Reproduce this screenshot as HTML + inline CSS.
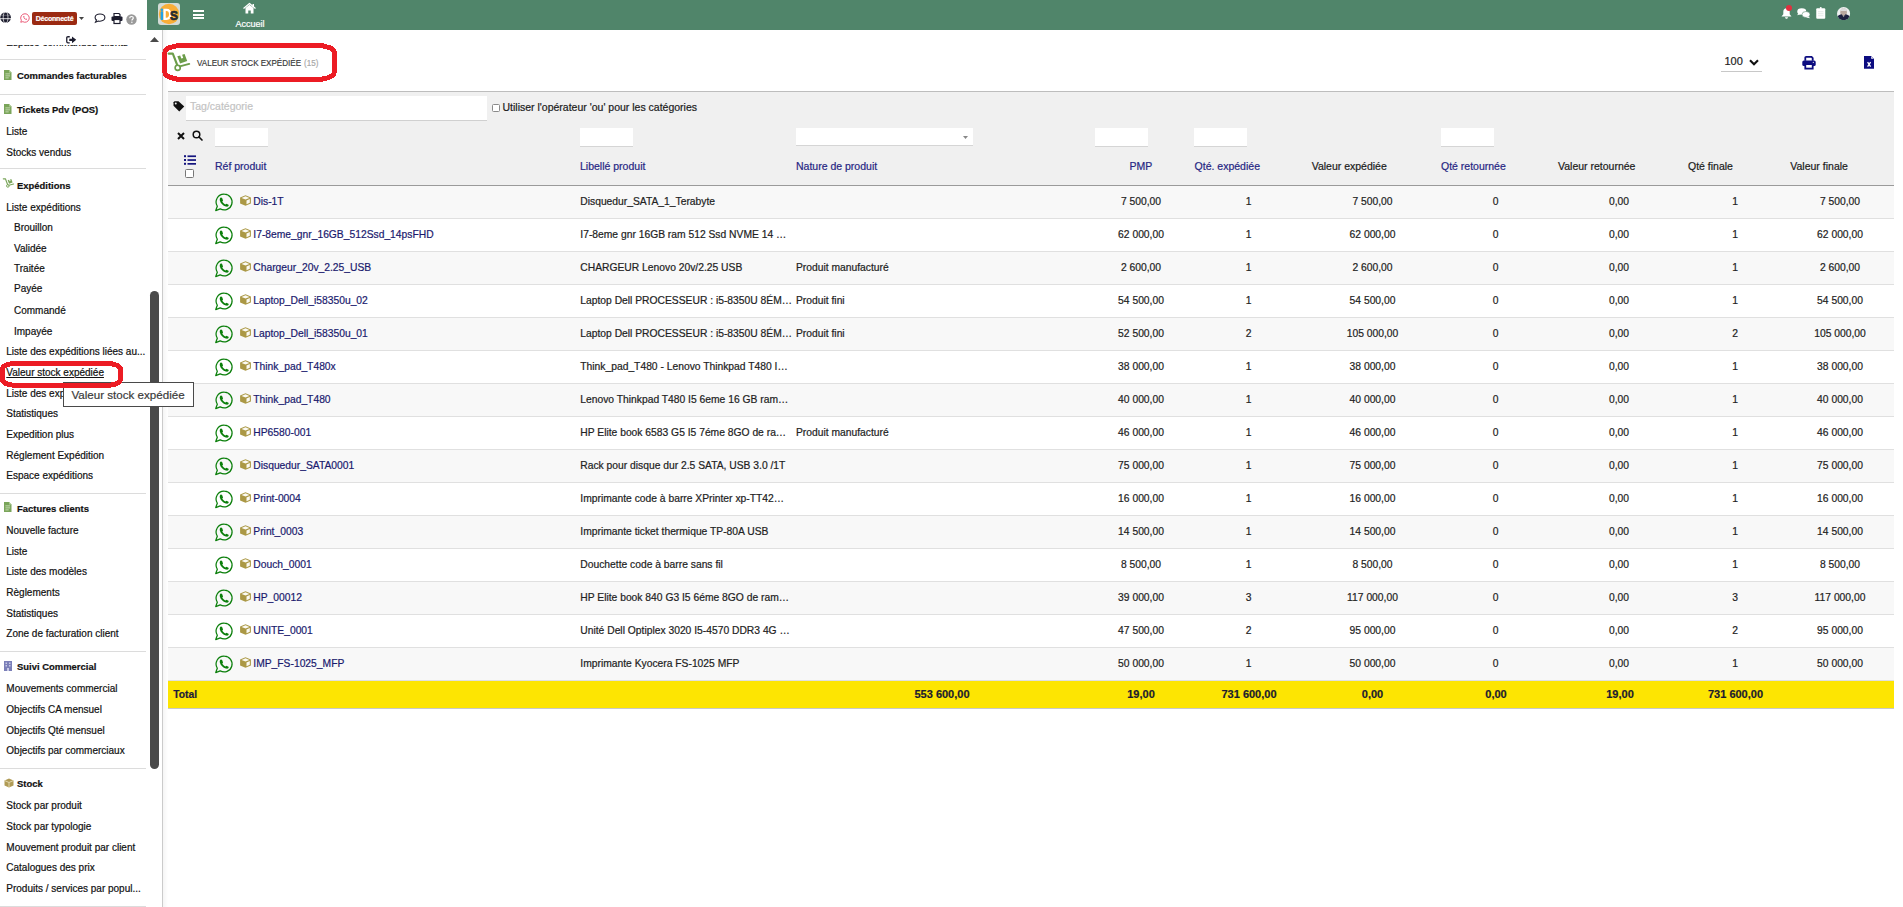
<!DOCTYPE html>
<html><head><meta charset="utf-8"><title>Valeur stock expédiée</title>
<style>
html,body{margin:0;padding:0;background:#fff;width:1903px;height:907px;overflow:hidden;}
body{position:relative;font-family:"Liberation Sans", sans-serif;}
.t{position:absolute;white-space:nowrap;-webkit-text-stroke:0.2px currentColor;}
.r{position:absolute;}
svg{position:absolute;overflow:visible;}
</style></head><body>

<div class="t " style="left:6.3px;top:37.00px;font-size:10px;line-height:12.5px;color:#111;font-weight:normal;">Espace commandes clients</div>
<div class="r" style="left:0px;top:59px;width:146px;height:1px;background:#dcdcdc;"></div>
<div class="t " style="left:17px;top:70.00px;font-size:9.7px;line-height:12.12px;color:#111;font-weight:bold;transform:scaleX(0.975);transform-origin:0 0;">Commandes facturables</div>
<svg style="left:4px;top:69.9px" width="7.5" height="10" viewBox="0 0 8 10" preserveAspectRatio="none"><path d="M0 0H5.5L8 2.5V10H0Z" fill="#7aa55a"/><path d="M5.5 0V2.5H8" fill="#b9d4a0"/><rect x="1.5" y="3.5" width="5" height="0.8" fill="#d6e6c6"/><rect x="1.5" y="5.5" width="5" height="0.8" fill="#d6e6c6"/><rect x="1.5" y="7.5" width="3.5" height="0.8" fill="#d6e6c6"/></svg>
<div class="r" style="left:0px;top:94px;width:146px;height:1px;background:#dcdcdc;"></div>
<div class="t " style="left:17px;top:104.00px;font-size:9.7px;line-height:12.12px;color:#111;font-weight:bold;transform:scaleX(0.975);transform-origin:0 0;">Tickets Pdv (POS)</div>
<svg style="left:4px;top:103.8px" width="7.5" height="10" viewBox="0 0 8 10" preserveAspectRatio="none"><path d="M0 0H5.5L8 2.5V10H0Z" fill="#7aa55a"/><path d="M5.5 0V2.5H8" fill="#b9d4a0"/><rect x="1.5" y="3.5" width="5" height="0.8" fill="#d6e6c6"/><rect x="1.5" y="5.5" width="5" height="0.8" fill="#d6e6c6"/><rect x="1.5" y="7.5" width="3.5" height="0.8" fill="#d6e6c6"/></svg>
<div class="t " style="left:6.3px;top:126.00px;font-size:10px;line-height:12.5px;color:#111;font-weight:normal;">Liste</div>
<div class="t " style="left:6.3px;top:147.00px;font-size:10px;line-height:12.5px;color:#111;font-weight:normal;">Stocks vendus</div>
<div class="r" style="left:0px;top:168px;width:146px;height:1px;background:#dcdcdc;"></div>
<div class="t " style="left:17px;top:180.00px;font-size:9.7px;line-height:12.12px;color:#111;font-weight:bold;transform:scaleX(0.975);transform-origin:0 0;">Expéditions</div>
<svg style="left:1px;top:176.3px" width="15" height="13.5" viewBox="0 0 30 27"><path d="M4.6 5.6H8.8L13.2 17" stroke="#7aa55a" stroke-width="2.3" fill="none" stroke-linecap="round" stroke-linejoin="round"/><circle cx="13.7" cy="19.8" r="2.6" stroke="#7aa55a" stroke-width="2" fill="none"/><path d="M15.8 18.4L25.2 15.9" stroke="#7aa55a" stroke-width="2.2" stroke-linecap="round"/><path d="M13.3 8.3L16.2 7.4L17.3 10.6L19.2 10L18.1 6.8L20.6 6L23.2 13.1L16.1 15.4Z" fill="#7aa55a"/></svg>
<div class="t " style="left:6.3px;top:202.00px;font-size:10px;line-height:12.5px;color:#111;font-weight:normal;">Liste expéditions</div>
<div class="t " style="left:14px;top:222.00px;font-size:10px;line-height:12.5px;color:#111;font-weight:normal;">Brouillon</div>
<div class="t " style="left:14px;top:243.00px;font-size:10px;line-height:12.5px;color:#111;font-weight:normal;">Validée</div>
<div class="t " style="left:14px;top:263.00px;font-size:10px;line-height:12.5px;color:#111;font-weight:normal;">Traitée</div>
<div class="t " style="left:14px;top:283.00px;font-size:10px;line-height:12.5px;color:#111;font-weight:normal;">Payée</div>
<div class="t " style="left:14px;top:305.00px;font-size:10px;line-height:12.5px;color:#111;font-weight:normal;">Commandé</div>
<div class="t " style="left:14px;top:326.00px;font-size:10px;line-height:12.5px;color:#111;font-weight:normal;">Impayée</div>
<div class="t " style="left:6.3px;top:346.00px;font-size:10px;line-height:12.5px;color:#111;font-weight:normal;">Liste des expéditions liées au...</div>
<div class="t " style="left:6.3px;top:367.00px;font-size:10px;line-height:12.5px;color:#111;font-weight:normal;text-decoration:underline;">Valeur stock expédiée</div>
<div class="t " style="left:6.3px;top:388.00px;font-size:10px;line-height:12.5px;color:#111;font-weight:normal;">Liste des expéditions</div>
<div class="t " style="left:6.3px;top:408.00px;font-size:10px;line-height:12.5px;color:#111;font-weight:normal;">Statistiques</div>
<div class="t " style="left:6.3px;top:429.00px;font-size:10px;line-height:12.5px;color:#111;font-weight:normal;">Expedition plus</div>
<div class="t " style="left:6.3px;top:450.00px;font-size:10px;line-height:12.5px;color:#111;font-weight:normal;">Réglement Expédition</div>
<div class="t " style="left:6.3px;top:470.00px;font-size:10px;line-height:12.5px;color:#111;font-weight:normal;">Espace expéditions</div>
<div class="r" style="left:0px;top:493px;width:146px;height:1px;background:#dcdcdc;"></div>
<div class="t " style="left:17px;top:503.00px;font-size:9.7px;line-height:12.12px;color:#111;font-weight:bold;transform:scaleX(0.975);transform-origin:0 0;">Factures clients</div>
<svg style="left:4px;top:502.2px" width="7.5" height="10" viewBox="0 0 8 10" preserveAspectRatio="none"><path d="M0 0H5.5L8 2.5V10H0Z" fill="#7aa55a"/><path d="M5.5 0V2.5H8" fill="#b9d4a0"/><rect x="1.5" y="3.5" width="5" height="0.8" fill="#d6e6c6"/><rect x="1.5" y="5.5" width="5" height="0.8" fill="#d6e6c6"/><rect x="1.5" y="7.5" width="3.5" height="0.8" fill="#d6e6c6"/></svg>
<div class="t " style="left:6.3px;top:525.00px;font-size:10px;line-height:12.5px;color:#111;font-weight:normal;">Nouvelle facture</div>
<div class="t " style="left:6.3px;top:546.00px;font-size:10px;line-height:12.5px;color:#111;font-weight:normal;">Liste</div>
<div class="t " style="left:6.3px;top:566.00px;font-size:10px;line-height:12.5px;color:#111;font-weight:normal;">Liste des modèles</div>
<div class="t " style="left:6.3px;top:587.00px;font-size:10px;line-height:12.5px;color:#111;font-weight:normal;">Règlements</div>
<div class="t " style="left:6.3px;top:608.00px;font-size:10px;line-height:12.5px;color:#111;font-weight:normal;">Statistiques</div>
<div class="t " style="left:6.3px;top:628.00px;font-size:10px;line-height:12.5px;color:#111;font-weight:normal;">Zone de facturation client</div>
<div class="r" style="left:0px;top:651px;width:146px;height:1px;background:#dcdcdc;"></div>
<div class="t " style="left:17px;top:661.00px;font-size:9.7px;line-height:12.12px;color:#111;font-weight:bold;transform:scaleX(0.975);transform-origin:0 0;">Suivi Commercial</div>
<svg style="left:4px;top:661.0px" width="8" height="10" viewBox="0 0 8 10"><rect x="0" y="0" width="8" height="10" fill="#7b7fb8"/><rect x="1.5" y="1.5" width="1.5" height="1.5" fill="#c8cae6"/><rect x="5" y="1.5" width="1.5" height="1.5" fill="#c8cae6"/><rect x="1.5" y="4" width="1.5" height="1.5" fill="#c8cae6"/><rect x="5" y="4" width="1.5" height="1.5" fill="#c8cae6"/><rect x="3" y="7" width="2" height="3" fill="#c8cae6"/></svg>
<div class="t " style="left:6.3px;top:683.00px;font-size:10px;line-height:12.5px;color:#111;font-weight:normal;">Mouvements commercial</div>
<div class="t " style="left:6.3px;top:704.00px;font-size:10px;line-height:12.5px;color:#111;font-weight:normal;">Objectifs CA mensuel</div>
<div class="t " style="left:6.3px;top:725.00px;font-size:10px;line-height:12.5px;color:#111;font-weight:normal;">Objectifs Qté mensuel</div>
<div class="t " style="left:6.3px;top:745.00px;font-size:10px;line-height:12.5px;color:#111;font-weight:normal;">Objectifs par commerciaux</div>
<div class="r" style="left:0px;top:768px;width:146px;height:1px;background:#dcdcdc;"></div>
<div class="t " style="left:17px;top:778.00px;font-size:9.7px;line-height:12.12px;color:#111;font-weight:bold;transform:scaleX(0.975);transform-origin:0 0;">Stock</div>
<svg style="left:4px;top:778.0px" width="10" height="10" viewBox="0 0 10 10"><path d="M5 0.5L9.5 2.5V7.5L5 9.5L0.5 7.5V2.5Z" fill="#b09b55"/><path d="M0.5 2.5L5 4.5L9.5 2.5" stroke="#e7dcb5" stroke-width="0.9" fill="none"/><path d="M5 4.5V9.5" stroke="#e7dcb5" stroke-width="0.9"/></svg>
<div class="t " style="left:6.3px;top:800.00px;font-size:10px;line-height:12.5px;color:#111;font-weight:normal;">Stock par produit</div>
<div class="t " style="left:6.3px;top:821.00px;font-size:10px;line-height:12.5px;color:#111;font-weight:normal;">Stock par typologie</div>
<div class="t " style="left:6.3px;top:842.00px;font-size:10px;line-height:12.5px;color:#111;font-weight:normal;">Mouvement produit par client</div>
<div class="t " style="left:6.3px;top:862.00px;font-size:10px;line-height:12.5px;color:#111;font-weight:normal;">Catalogues des prix</div>
<div class="t " style="left:6.3px;top:883.00px;font-size:10px;line-height:12.5px;color:#111;font-weight:normal;">Produits / services par popul...</div>
<div class="r" style="left:0px;top:906px;width:146px;height:1px;background:#dcdcdc;"></div>
<div class="r" style="left:0px;top:0px;width:147px;height:45px;background:#fff;"></div>
<svg style="left:0px;top:12.2px" width="11.2" height="11" viewBox="0 0 12 12"><circle cx="6" cy="6" r="5.8" fill="#1d1d2e"/><ellipse cx="6" cy="6" rx="2.6" ry="5.8" fill="none" stroke="#fff" stroke-width="0.75"/><path d="M0 7.3H12" stroke="#fff" stroke-width="0.9"/><path d="M1 3.6H11" stroke="#fff" stroke-width="0.5" opacity="0.6"/></svg>
<svg style="left:20px;top:12.5px" width="10" height="10" viewBox="0 0 20 20"><path d="M10 1.5A8.5 8.5 0 1 1 5.6 17.3L1.5 18.5L2.7 14.6A8.5 8.5 0 0 1 10 1.5Z" fill="none" stroke="#e84a6a" stroke-width="1.8"/><path d="M6.5 6C6.5 10 9.5 13.5 13.8 13.5L14.2 12L12.4 11L11.6 11.8C10 11 9 10 8.3 8.5L9.1 7.6L8.2 5.8Z" fill="#e84a6a"/></svg>
<div class="r" style="left:32px;top:12px;width:45px;height:13px;background:#9b2a12;border-radius:2px;"></div>
<div class="t" style="left:32px;top:12px;width:45px;height:13px;line-height:13px;text-align:center;font-size:7px;font-weight:bold;color:#fff;letter-spacing:-0.2px">Déconnecté</div>
<svg style="left:79px;top:17px" width="5" height="3" viewBox="0 0 5 3"><path d="M0 0H5L2.5 3Z" fill="#444"/></svg>
<svg style="left:94px;top:12.5px" width="12" height="10" viewBox="0 0 24 20"><path d="M12 2C6.5 2 2.2 5 2.2 9C2.2 11 3.3 12.8 5 14L3 18.5L8.5 16C9.6 16.3 10.8 16.4 12 16.4C17.5 16.4 21.8 13.2 21.8 9.2C21.8 5.2 17.5 2 12 2Z" fill="none" stroke="#1d1d2e" stroke-width="2.2"/></svg>
<svg style="left:111px;top:13px" width="12" height="11" viewBox="0 0 24 22"><path d="M6 1H16L18 3V7H6Z" fill="none" stroke="#1d1d2e" stroke-width="2.4"/><rect x="1" y="7" width="22" height="9" rx="2" fill="#1d1d2e"/><rect x="6" y="13" width="12" height="8" fill="#fff" stroke="#1d1d2e" stroke-width="2.4"/></svg>
<svg style="left:126px;top:13.5px" width="11" height="11" viewBox="0 0 22 22"><circle cx="11" cy="11" r="10.5" fill="#9a9a9a"/><path d="M7.5 8.3C7.5 6 9.2 5 11 5C13 5 14.6 6.2 14.6 8C14.6 10.3 11.8 10.5 11.8 12.8" fill="none" stroke="#fff" stroke-width="2.4"/><circle cx="11.7" cy="16.3" r="1.5" fill="#fff"/></svg>
<svg style="left:66px;top:35.8px" width="10.5" height="7.6" viewBox="0 0 21 15.2"><path d="M7.5 1.5H4Q1.5 1.5 1.5 4V11.2Q1.5 13.7 4 13.7H7.5" fill="none" stroke="#1d1d2e" stroke-width="2.6"/><path d="M6.5 5.3H12V0.8L20.5 7.6L12 14.4V9.9H6.5Z" fill="#1d1d2e"/></svg>
<svg style="left:150px;top:37px" width="9" height="5" viewBox="0 0 9 5"><path d="M0 5H9L4.5 0Z" fill="#4a4a4a"/></svg>
<div class="r" style="left:150px;top:291px;width:9px;height:478px;background:#4a4a4a;border-radius:4.5px;"></div>
<div class="r" style="left:162px;top:30px;width:1px;height:877px;background:#cbcbcb;"></div>
<div class="r" style="left:163px;top:30px;width:5px;height:877px;background:linear-gradient(to right,#f5f5f5,#fbfbfb 60%,#fff);"></div>
<div class="r" style="left:147px;top:0px;width:1756px;height:30px;background:#50856a;"></div>
<svg style="left:158px;top:3px" width="22" height="22" viewBox="0 0 22 22"><rect x="0" y="0" width="22" height="22" rx="3" fill="#d3dbd6"/><circle cx="11" cy="11" r="10.2" fill="#f8ae38"/><rect x="2.6" y="8.2" width="2.6" height="8.8" rx="0.8" fill="#1fa3e8"/><circle cx="3.9" cy="6.7" r="1.3" fill="#1fa3e8"/><path d="M6.6 6.8H8.4C11 6.8 12.2 8.6 12.2 11.3C12.2 14 11 15.8 8.4 15.8H6.6Z" fill="none" stroke="#fff" stroke-width="2.3"/><text x="11.9" y="17.3" font-family="Liberation Sans" font-weight="bold" font-size="13.5" textLength="8" lengthAdjust="spacingAndGlyphs" fill="#222a33" stroke="#222a33" stroke-width="0.7">S</text></svg>
<div class="r" style="left:193px;top:10.3px;width:11px;height:1.7px;background:#fff;"></div>
<div class="r" style="left:193px;top:13.9px;width:11px;height:1.7px;background:#fff;"></div>
<div class="r" style="left:193px;top:17.4px;width:11px;height:1.7px;background:#fff;"></div>
<svg style="left:243px;top:2.5px" width="13" height="11" viewBox="0 0 26 22"><path d="M1 11L13 1L25 11" fill="none" stroke="#fff" stroke-width="2.6" stroke-linejoin="round"/><path d="M5 10V21H10.5V15H15.5V21H21V10L13 3.5Z" fill="#fff"/><rect x="19" y="2" width="3" height="6" fill="#fff"/></svg>
<div class="t " style="left:235.5px;top:19.00px;font-size:9px;line-height:11.25px;color:#fff;font-weight:normal;">Accueil</div>
<svg style="left:1780.5px;top:7px" width="11" height="12" viewBox="0 0 22 24"><path d="M11 2.5C7 2.5 4.6 5.5 4.6 9.5V14.5L1 19H21L17.4 14.5V9.5C17.4 5.5 15 2.5 11 2.5Z" fill="#fff"/><path d="M8 20.5H14C14 22.3 12.6 23.5 11 23.5C9.4 23.5 8 22.3 8 20.5Z" fill="#fff"/></svg>
<div class="r" style="left:1786px;top:4.8px;width:6px;height:6px;border-radius:50%;background:#e0303f;"></div>
<svg style="left:1797px;top:7.8px" width="13.5" height="10.5" viewBox="0 0 27 21"><ellipse cx="9.5" cy="7" rx="9" ry="6.5" fill="#fff"/><path d="M2.5 10.5L0.5 14.5L7 12.5Z" fill="#fff"/><ellipse cx="18" cy="13" rx="8" ry="6" fill="#fff" stroke="#50856a" stroke-width="1.1"/><path d="M22 16.5L26.5 20.5L18.5 18.8Z" fill="#fff"/></svg>
<svg style="left:1815.5px;top:7px" width="9.5" height="12" viewBox="0 0 19 24"><rect x="0.5" y="2.5" width="18" height="21" rx="2" fill="#fff"/><circle cx="9.5" cy="2.2" r="2" fill="#fff"/><path d="M4 9.5H15M4 13.5H15M4 17.5H15" stroke="#d5ddd8" stroke-width="1.3"/></svg>
<svg style="left:1837px;top:6.8px" width="13.2" height="13.2" viewBox="0 0 20 20"><defs><clipPath id="av"><circle cx="10" cy="10" r="10"/></clipPath></defs><g clip-path="url(#av)"><rect width="20" height="20" fill="#eef0f0"/><ellipse cx="10" cy="8" rx="5" ry="6" fill="#b9a9a0"/><path d="M5 6C5.5 2.5 8 1.5 10 1.5C12 1.5 14.5 2.5 15 6" fill="#ddd" /><path d="M0 20V15C2 12.5 5 11.5 7 11L10 14L13 11C15 11.5 18 12.5 20 15V20Z" fill="#1c2140"/><path d="M7 11L10 15.5L13 11L12 13.5H8Z" fill="#9a9a9a"/></g></svg>
<svg style="left:164px;top:48px" width="30" height="27" viewBox="0 0 30 27"><path d="M4.6 5.6H8.8L13.2 17" stroke="#6c9d4a" stroke-width="2.1" fill="none" stroke-linecap="round" stroke-linejoin="round"/><circle cx="13.7" cy="19.8" r="2.6" stroke="#6c9d4a" stroke-width="1.6" fill="none"/><path d="M15.8 18.4L25.2 15.9" stroke="#6c9d4a" stroke-width="2" stroke-linecap="round"/><path d="M13.3 8.3L16.2 7.4L17.3 10.6L19.2 10L18.1 6.8L20.6 6L23.2 13.1L16.1 15.4Z" fill="#6c9d4a"/></svg>
<div class="t" style="left:197px;top:57.2px;font-size:9.6px;line-height:11px;color:#3a3a3a;transform:scaleX(0.84);transform-origin:0 0">VALEUR STOCK EXPÉDIÉE</div>
<div class="t" style="left:303.5px;top:57.2px;font-size:9.6px;line-height:11px;color:#a8a8a8;transform:scaleX(0.84);transform-origin:0 0">(15)</div>
<svg style="left:0;top:0" width="400" height="100" shape-rendering="crispEdges"><rect x="164.9" y="45.3" width="169.3" height="34.3" rx="19" ry="7" fill="none" stroke="#ec1c24" stroke-width="5"/></svg>
<div class="t " style="left:1724.5px;top:55.00px;font-size:11px;line-height:13.75px;color:#222;font-weight:normal;">100</div>
<svg style="left:1749px;top:58.5px" width="10" height="7" viewBox="0 0 10 7"><path d="M1 1.3L5 5.3L9 1.3" stroke="#111" stroke-width="2.1" fill="none"/></svg>
<div class="r" style="left:1721px;top:71px;width:41px;height:1px;background:#c8c8c8;"></div>
<svg style="left:1802px;top:55.5px" width="14" height="13.5" viewBox="0 0 14 13.5"><path d="M3.3 4.8V1.8Q3.3 0.9 4.2 0.9H9.6L10.7 2V4.8" stroke="#0c0c80" stroke-width="1.8" fill="none"/><rect x="0.3" y="4.5" width="13.4" height="5.6" rx="1.6" fill="#0c0c80"/><rect x="3.3" y="8.1" width="7.4" height="4.5" fill="#fff" stroke="#0c0c80" stroke-width="1.8"/><circle cx="11.3" cy="6.3" r="0.6" fill="#fff"/></svg>
<svg style="left:1864px;top:56px" width="10" height="12.8" viewBox="0 0 10 12.8"><path d="M0 0H7L10 3V12.8H0Z" fill="#0c0c80"/><path d="M7.2 0.6V2.8H9.4Z" fill="#fff"/><path d="M3.6 6.2L6.6 10.6M6.6 6.2L3.6 10.6" stroke="#fff" stroke-width="1.3"/></svg>
<div class="r" style="left:168px;top:91px;width:1726px;height:1px;background:#bdbdbd;"></div>
<div class="r" style="left:168px;top:92px;width:1726px;height:93px;background:#f0f0f0;"></div>
<div class="r" style="left:168px;top:185px;width:1726px;height:1px;background:#9a9a9a;"></div>
<svg style="left:172.5px;top:101px" width="12" height="11" viewBox="0 0 24 22"><path d="M1 2.5V9.5L12.5 21L22.5 11L11 0.5H3Z" fill="#111"/><circle cx="5.5" cy="5" r="2" fill="#f0f0f0"/></svg>
<div class="r" style="left:186px;top:96px;width:301px;height:24px;background:#fff;border-bottom:1px solid #d0d0d0;box-sizing:border-box;height:25px;"></div>
<div class="t " style="left:190px;top:100.00px;font-size:10.5px;line-height:13.12px;color:#c3c3c3;font-weight:normal;">Tag/catégorie</div>
<div class="r" style="left:492px;top:104px;width:6px;height:6px;border:1px solid #8a8a8a;border-radius:1.5px;background:#fff"></div>
<div class="t " style="left:502.5px;top:101.00px;font-size:10.5px;line-height:13.12px;color:#1b1b1b;font-weight:normal;">Utiliser l&#39;opérateur &#39;ou&#39; pour les catégories</div>
<svg style="left:176.5px;top:132px" width="8" height="8" viewBox="0 0 8 8"><path d="M1 1L7 7M7 1L1 7" stroke="#111" stroke-width="2"/></svg>
<svg style="left:191.8px;top:130.2px" width="11.2" height="11" viewBox="0 0 22.4 22"><circle cx="9" cy="9" r="6.6" stroke="#111" stroke-width="3" fill="none"/><path d="M14 14L20 20" stroke="#111" stroke-width="3.4" stroke-linecap="round"/></svg>
<div class="r" style="left:215px;top:128px;width:53px;height:19px;background:#fff;border-bottom:1px solid #d5d5d5;box-sizing:border-box"></div>
<div class="r" style="left:580px;top:128px;width:53px;height:19px;background:#fff;border-bottom:1px solid #d5d5d5;box-sizing:border-box"></div>
<div class="r" style="left:1095px;top:128px;width:53px;height:19px;background:#fff;border-bottom:1px solid #d5d5d5;box-sizing:border-box"></div>
<div class="r" style="left:1194px;top:128px;width:53px;height:19px;background:#fff;border-bottom:1px solid #d5d5d5;box-sizing:border-box"></div>
<div class="r" style="left:1441px;top:128px;width:53px;height:19px;background:#fff;border-bottom:1px solid #d5d5d5;box-sizing:border-box"></div>
<div class="r" style="left:796px;top:128px;width:177px;height:18px;background:#fff;border-bottom:1px solid #d5d5d5;box-sizing:border-box"></div>
<svg style="left:963px;top:136px" width="5" height="3" viewBox="0 0 5 3"><path d="M0 0H5L2.5 3Z" fill="#888"/></svg>
<svg style="left:184px;top:155px" width="12" height="10" viewBox="0 0 12 10"><rect x="0" y="0.2" width="2" height="2" fill="#14147e"/><rect x="0" y="4" width="2" height="2" fill="#14147e"/><rect x="0" y="7.8" width="2" height="2" fill="#14147e"/><rect x="3.5" y="0.4" width="8.5" height="1.7" fill="#14147e"/><rect x="3.5" y="4.2" width="8.5" height="1.7" fill="#14147e"/><rect x="3.5" y="8.0" width="8.5" height="1.7" fill="#14147e"/></svg>
<div class="r" style="left:185px;top:169px;width:7px;height:7px;border:1px solid #777;border-radius:1.5px;background:#fff"></div>
<div class="t " style="left:215px;top:160.00px;font-size:10.5px;line-height:13.12px;color:#262683;font-weight:normal;">Réf produit</div>
<div class="t " style="left:580px;top:160.00px;font-size:10.5px;line-height:13.12px;color:#262683;font-weight:normal;">Libellé produit</div>
<div class="t " style="left:796px;top:160.00px;font-size:10.5px;line-height:13.12px;color:#262683;font-weight:normal;">Nature de produit</div>
<div class="t " style="left:1129.6px;top:160.00px;font-size:10.5px;line-height:13.12px;color:#262683;font-weight:normal;">PMP</div>
<div class="t " style="left:1194.6px;top:160.00px;font-size:10.5px;line-height:13.12px;color:#262683;font-weight:normal;">Qté. expédiée</div>
<div class="t " style="left:1311.7px;top:160.00px;font-size:10.5px;line-height:13.12px;color:#1b1b1b;font-weight:normal;">Valeur expédiée</div>
<div class="t " style="left:1441px;top:160.00px;font-size:10.5px;line-height:13.12px;color:#262683;font-weight:normal;">Qté retournée</div>
<div class="t " style="left:1558px;top:160.00px;font-size:10.5px;line-height:13.12px;color:#1b1b1b;font-weight:normal;">Valeur retournée</div>
<div class="t " style="left:1688px;top:160.00px;font-size:10.5px;line-height:13.12px;color:#1b1b1b;font-weight:normal;">Qté finale</div>
<div class="t " style="left:1790.3px;top:160.00px;font-size:10.5px;line-height:13.12px;color:#1b1b1b;font-weight:normal;">Valeur finale</div>
<div class="r" style="left:168px;top:186px;width:1726px;height:32px;background:#f8f8f8;"></div>
<div class="r" style="left:168px;top:218px;width:1726px;height:1px;background:#e0e0e0;"></div>
<svg style="left:214.7px;top:192.8px" width="18.5" height="18.5" viewBox="0 0 20 20"><path d="M10.2 1.3A8.5 8.5 0 1 1 5.6 17.1L0.8 19L2.5 14.3A8.5 8.5 0 0 1 10.2 1.3Z" fill="none" stroke="#0b7f0b" stroke-width="1.35" stroke-linejoin="round"/><path d="M5.9 5.2C5.2 6 4.9 6.9 5.3 8.3C6.1 11.1 8.7 13.7 11.7 14.6C13.1 15 14.1 14.6 14.8 13.8L14.6 12.6L12.4 11.5L11.3 12.4C9.9 11.8 8.6 10.5 7.9 9.1L8.7 8L7.7 5.5C7 4.8 6.4 4.8 5.9 5.2Z" fill="#0b7f0b"/></svg>
<svg style="left:239.8px;top:195.3px" width="11" height="11" viewBox="0 0 11 11"><path d="M5.5 0.2L10.9 2.5V8.5L5.5 10.8L0.1 8.5V2.5Z" fill="#ab9845"/><path d="M5.5 1.3L9.5 2.9L5.5 4.5L1.5 2.9Z" fill="#fbfaf4"/><path d="M6.5 5.5L9.8 4.0V7.8L6.5 9.3Z" fill="#fbfaf4"/></svg>
<div class="t " style="left:253.3px;top:196.00px;font-size:10.3px;line-height:12.88px;color:#1a1a6e;font-weight:normal;">Dis-1T</div>
<div class="t " style="left:580.3px;top:196.00px;font-size:10.3px;line-height:12.88px;color:#222;font-weight:normal;">Disquedur_SATA_1_Terabyte</div>
<div class="t " style="left:991px;width:300px;text-align:center;top:196.00px;font-size:10.3px;line-height:12.88px;color:#222;font-weight:normal;">7 500,00</div>
<div class="t " style="left:1098.5px;width:300px;text-align:center;top:196.00px;font-size:10.3px;line-height:12.88px;color:#222;font-weight:normal;">1</div>
<div class="t " style="left:1222.5px;width:300px;text-align:center;top:196.00px;font-size:10.3px;line-height:12.88px;color:#222;font-weight:normal;">7 500,00</div>
<div class="t " style="left:1345.5px;width:300px;text-align:center;top:196.00px;font-size:10.3px;line-height:12.88px;color:#222;font-weight:normal;">0</div>
<div class="t " style="left:1469px;width:300px;text-align:center;top:196.00px;font-size:10.3px;line-height:12.88px;color:#222;font-weight:normal;">0,00</div>
<div class="t " style="left:1585px;width:300px;text-align:center;top:196.00px;font-size:10.3px;line-height:12.88px;color:#222;font-weight:normal;">1</div>
<div class="t " style="left:1690px;width:300px;text-align:center;top:196.00px;font-size:10.3px;line-height:12.88px;color:#222;font-weight:normal;">7 500,00</div>
<div class="r" style="left:168px;top:219px;width:1726px;height:32px;background:#ffffff;"></div>
<div class="r" style="left:168px;top:251px;width:1726px;height:1px;background:#e0e0e0;"></div>
<svg style="left:214.7px;top:225.8px" width="18.5" height="18.5" viewBox="0 0 20 20"><path d="M10.2 1.3A8.5 8.5 0 1 1 5.6 17.1L0.8 19L2.5 14.3A8.5 8.5 0 0 1 10.2 1.3Z" fill="none" stroke="#0b7f0b" stroke-width="1.35" stroke-linejoin="round"/><path d="M5.9 5.2C5.2 6 4.9 6.9 5.3 8.3C6.1 11.1 8.7 13.7 11.7 14.6C13.1 15 14.1 14.6 14.8 13.8L14.6 12.6L12.4 11.5L11.3 12.4C9.9 11.8 8.6 10.5 7.9 9.1L8.7 8L7.7 5.5C7 4.8 6.4 4.8 5.9 5.2Z" fill="#0b7f0b"/></svg>
<svg style="left:239.8px;top:228.3px" width="11" height="11" viewBox="0 0 11 11"><path d="M5.5 0.2L10.9 2.5V8.5L5.5 10.8L0.1 8.5V2.5Z" fill="#ab9845"/><path d="M5.5 1.3L9.5 2.9L5.5 4.5L1.5 2.9Z" fill="#fbfaf4"/><path d="M6.5 5.5L9.8 4.0V7.8L6.5 9.3Z" fill="#fbfaf4"/></svg>
<div class="t " style="left:253.3px;top:229.00px;font-size:10.3px;line-height:12.88px;color:#1a1a6e;font-weight:normal;">I7-8eme_gnr_16GB_512Ssd_14psFHD</div>
<div class="t " style="left:580.3px;top:229.00px;font-size:10.3px;line-height:12.88px;color:#222;font-weight:normal;">I7-8eme gnr 16GB ram 512 Ssd NVME 14 …</div>
<div class="t " style="left:991px;width:300px;text-align:center;top:229.00px;font-size:10.3px;line-height:12.88px;color:#222;font-weight:normal;">62 000,00</div>
<div class="t " style="left:1098.5px;width:300px;text-align:center;top:229.00px;font-size:10.3px;line-height:12.88px;color:#222;font-weight:normal;">1</div>
<div class="t " style="left:1222.5px;width:300px;text-align:center;top:229.00px;font-size:10.3px;line-height:12.88px;color:#222;font-weight:normal;">62 000,00</div>
<div class="t " style="left:1345.5px;width:300px;text-align:center;top:229.00px;font-size:10.3px;line-height:12.88px;color:#222;font-weight:normal;">0</div>
<div class="t " style="left:1469px;width:300px;text-align:center;top:229.00px;font-size:10.3px;line-height:12.88px;color:#222;font-weight:normal;">0,00</div>
<div class="t " style="left:1585px;width:300px;text-align:center;top:229.00px;font-size:10.3px;line-height:12.88px;color:#222;font-weight:normal;">1</div>
<div class="t " style="left:1690px;width:300px;text-align:center;top:229.00px;font-size:10.3px;line-height:12.88px;color:#222;font-weight:normal;">62 000,00</div>
<div class="r" style="left:168px;top:252px;width:1726px;height:32px;background:#f8f8f8;"></div>
<div class="r" style="left:168px;top:284px;width:1726px;height:1px;background:#e0e0e0;"></div>
<svg style="left:214.7px;top:258.8px" width="18.5" height="18.5" viewBox="0 0 20 20"><path d="M10.2 1.3A8.5 8.5 0 1 1 5.6 17.1L0.8 19L2.5 14.3A8.5 8.5 0 0 1 10.2 1.3Z" fill="none" stroke="#0b7f0b" stroke-width="1.35" stroke-linejoin="round"/><path d="M5.9 5.2C5.2 6 4.9 6.9 5.3 8.3C6.1 11.1 8.7 13.7 11.7 14.6C13.1 15 14.1 14.6 14.8 13.8L14.6 12.6L12.4 11.5L11.3 12.4C9.9 11.8 8.6 10.5 7.9 9.1L8.7 8L7.7 5.5C7 4.8 6.4 4.8 5.9 5.2Z" fill="#0b7f0b"/></svg>
<svg style="left:239.8px;top:261.3px" width="11" height="11" viewBox="0 0 11 11"><path d="M5.5 0.2L10.9 2.5V8.5L5.5 10.8L0.1 8.5V2.5Z" fill="#ab9845"/><path d="M5.5 1.3L9.5 2.9L5.5 4.5L1.5 2.9Z" fill="#fbfaf4"/><path d="M6.5 5.5L9.8 4.0V7.8L6.5 9.3Z" fill="#fbfaf4"/></svg>
<div class="t " style="left:253.3px;top:262.00px;font-size:10.3px;line-height:12.88px;color:#1a1a6e;font-weight:normal;">Chargeur_20v_2.25_USB</div>
<div class="t " style="left:580.3px;top:262.00px;font-size:10.3px;line-height:12.88px;color:#222;font-weight:normal;">CHARGEUR Lenovo 20v/2.25 USB</div>
<div class="t " style="left:796px;top:262.00px;font-size:10.3px;line-height:12.88px;color:#222;font-weight:normal;">Produit manufacturé</div>
<div class="t " style="left:991px;width:300px;text-align:center;top:262.00px;font-size:10.3px;line-height:12.88px;color:#222;font-weight:normal;">2 600,00</div>
<div class="t " style="left:1098.5px;width:300px;text-align:center;top:262.00px;font-size:10.3px;line-height:12.88px;color:#222;font-weight:normal;">1</div>
<div class="t " style="left:1222.5px;width:300px;text-align:center;top:262.00px;font-size:10.3px;line-height:12.88px;color:#222;font-weight:normal;">2 600,00</div>
<div class="t " style="left:1345.5px;width:300px;text-align:center;top:262.00px;font-size:10.3px;line-height:12.88px;color:#222;font-weight:normal;">0</div>
<div class="t " style="left:1469px;width:300px;text-align:center;top:262.00px;font-size:10.3px;line-height:12.88px;color:#222;font-weight:normal;">0,00</div>
<div class="t " style="left:1585px;width:300px;text-align:center;top:262.00px;font-size:10.3px;line-height:12.88px;color:#222;font-weight:normal;">1</div>
<div class="t " style="left:1690px;width:300px;text-align:center;top:262.00px;font-size:10.3px;line-height:12.88px;color:#222;font-weight:normal;">2 600,00</div>
<div class="r" style="left:168px;top:285px;width:1726px;height:32px;background:#ffffff;"></div>
<div class="r" style="left:168px;top:317px;width:1726px;height:1px;background:#e0e0e0;"></div>
<svg style="left:214.7px;top:291.8px" width="18.5" height="18.5" viewBox="0 0 20 20"><path d="M10.2 1.3A8.5 8.5 0 1 1 5.6 17.1L0.8 19L2.5 14.3A8.5 8.5 0 0 1 10.2 1.3Z" fill="none" stroke="#0b7f0b" stroke-width="1.35" stroke-linejoin="round"/><path d="M5.9 5.2C5.2 6 4.9 6.9 5.3 8.3C6.1 11.1 8.7 13.7 11.7 14.6C13.1 15 14.1 14.6 14.8 13.8L14.6 12.6L12.4 11.5L11.3 12.4C9.9 11.8 8.6 10.5 7.9 9.1L8.7 8L7.7 5.5C7 4.8 6.4 4.8 5.9 5.2Z" fill="#0b7f0b"/></svg>
<svg style="left:239.8px;top:294.3px" width="11" height="11" viewBox="0 0 11 11"><path d="M5.5 0.2L10.9 2.5V8.5L5.5 10.8L0.1 8.5V2.5Z" fill="#ab9845"/><path d="M5.5 1.3L9.5 2.9L5.5 4.5L1.5 2.9Z" fill="#fbfaf4"/><path d="M6.5 5.5L9.8 4.0V7.8L6.5 9.3Z" fill="#fbfaf4"/></svg>
<div class="t " style="left:253.3px;top:295.00px;font-size:10.3px;line-height:12.88px;color:#1a1a6e;font-weight:normal;">Laptop_Dell_i58350u_02</div>
<div class="t " style="left:580.3px;top:295.00px;font-size:10.3px;line-height:12.88px;color:#222;font-weight:normal;">Laptop Dell PROCESSEUR : i5-8350U 8ÉM…</div>
<div class="t " style="left:796px;top:295.00px;font-size:10.3px;line-height:12.88px;color:#222;font-weight:normal;">Produit fini</div>
<div class="t " style="left:991px;width:300px;text-align:center;top:295.00px;font-size:10.3px;line-height:12.88px;color:#222;font-weight:normal;">54 500,00</div>
<div class="t " style="left:1098.5px;width:300px;text-align:center;top:295.00px;font-size:10.3px;line-height:12.88px;color:#222;font-weight:normal;">1</div>
<div class="t " style="left:1222.5px;width:300px;text-align:center;top:295.00px;font-size:10.3px;line-height:12.88px;color:#222;font-weight:normal;">54 500,00</div>
<div class="t " style="left:1345.5px;width:300px;text-align:center;top:295.00px;font-size:10.3px;line-height:12.88px;color:#222;font-weight:normal;">0</div>
<div class="t " style="left:1469px;width:300px;text-align:center;top:295.00px;font-size:10.3px;line-height:12.88px;color:#222;font-weight:normal;">0,00</div>
<div class="t " style="left:1585px;width:300px;text-align:center;top:295.00px;font-size:10.3px;line-height:12.88px;color:#222;font-weight:normal;">1</div>
<div class="t " style="left:1690px;width:300px;text-align:center;top:295.00px;font-size:10.3px;line-height:12.88px;color:#222;font-weight:normal;">54 500,00</div>
<div class="r" style="left:168px;top:318px;width:1726px;height:32px;background:#f8f8f8;"></div>
<div class="r" style="left:168px;top:350px;width:1726px;height:1px;background:#e0e0e0;"></div>
<svg style="left:214.7px;top:324.8px" width="18.5" height="18.5" viewBox="0 0 20 20"><path d="M10.2 1.3A8.5 8.5 0 1 1 5.6 17.1L0.8 19L2.5 14.3A8.5 8.5 0 0 1 10.2 1.3Z" fill="none" stroke="#0b7f0b" stroke-width="1.35" stroke-linejoin="round"/><path d="M5.9 5.2C5.2 6 4.9 6.9 5.3 8.3C6.1 11.1 8.7 13.7 11.7 14.6C13.1 15 14.1 14.6 14.8 13.8L14.6 12.6L12.4 11.5L11.3 12.4C9.9 11.8 8.6 10.5 7.9 9.1L8.7 8L7.7 5.5C7 4.8 6.4 4.8 5.9 5.2Z" fill="#0b7f0b"/></svg>
<svg style="left:239.8px;top:327.3px" width="11" height="11" viewBox="0 0 11 11"><path d="M5.5 0.2L10.9 2.5V8.5L5.5 10.8L0.1 8.5V2.5Z" fill="#ab9845"/><path d="M5.5 1.3L9.5 2.9L5.5 4.5L1.5 2.9Z" fill="#fbfaf4"/><path d="M6.5 5.5L9.8 4.0V7.8L6.5 9.3Z" fill="#fbfaf4"/></svg>
<div class="t " style="left:253.3px;top:328.00px;font-size:10.3px;line-height:12.88px;color:#1a1a6e;font-weight:normal;">Laptop_Dell_i58350u_01</div>
<div class="t " style="left:580.3px;top:328.00px;font-size:10.3px;line-height:12.88px;color:#222;font-weight:normal;">Laptop Dell PROCESSEUR : i5-8350U 8ÉM…</div>
<div class="t " style="left:796px;top:328.00px;font-size:10.3px;line-height:12.88px;color:#222;font-weight:normal;">Produit fini</div>
<div class="t " style="left:991px;width:300px;text-align:center;top:328.00px;font-size:10.3px;line-height:12.88px;color:#222;font-weight:normal;">52 500,00</div>
<div class="t " style="left:1098.5px;width:300px;text-align:center;top:328.00px;font-size:10.3px;line-height:12.88px;color:#222;font-weight:normal;">2</div>
<div class="t " style="left:1222.5px;width:300px;text-align:center;top:328.00px;font-size:10.3px;line-height:12.88px;color:#222;font-weight:normal;">105 000,00</div>
<div class="t " style="left:1345.5px;width:300px;text-align:center;top:328.00px;font-size:10.3px;line-height:12.88px;color:#222;font-weight:normal;">0</div>
<div class="t " style="left:1469px;width:300px;text-align:center;top:328.00px;font-size:10.3px;line-height:12.88px;color:#222;font-weight:normal;">0,00</div>
<div class="t " style="left:1585px;width:300px;text-align:center;top:328.00px;font-size:10.3px;line-height:12.88px;color:#222;font-weight:normal;">2</div>
<div class="t " style="left:1690px;width:300px;text-align:center;top:328.00px;font-size:10.3px;line-height:12.88px;color:#222;font-weight:normal;">105 000,00</div>
<div class="r" style="left:168px;top:351px;width:1726px;height:32px;background:#ffffff;"></div>
<div class="r" style="left:168px;top:383px;width:1726px;height:1px;background:#e0e0e0;"></div>
<svg style="left:214.7px;top:357.8px" width="18.5" height="18.5" viewBox="0 0 20 20"><path d="M10.2 1.3A8.5 8.5 0 1 1 5.6 17.1L0.8 19L2.5 14.3A8.5 8.5 0 0 1 10.2 1.3Z" fill="none" stroke="#0b7f0b" stroke-width="1.35" stroke-linejoin="round"/><path d="M5.9 5.2C5.2 6 4.9 6.9 5.3 8.3C6.1 11.1 8.7 13.7 11.7 14.6C13.1 15 14.1 14.6 14.8 13.8L14.6 12.6L12.4 11.5L11.3 12.4C9.9 11.8 8.6 10.5 7.9 9.1L8.7 8L7.7 5.5C7 4.8 6.4 4.8 5.9 5.2Z" fill="#0b7f0b"/></svg>
<svg style="left:239.8px;top:360.3px" width="11" height="11" viewBox="0 0 11 11"><path d="M5.5 0.2L10.9 2.5V8.5L5.5 10.8L0.1 8.5V2.5Z" fill="#ab9845"/><path d="M5.5 1.3L9.5 2.9L5.5 4.5L1.5 2.9Z" fill="#fbfaf4"/><path d="M6.5 5.5L9.8 4.0V7.8L6.5 9.3Z" fill="#fbfaf4"/></svg>
<div class="t " style="left:253.3px;top:361.00px;font-size:10.3px;line-height:12.88px;color:#1a1a6e;font-weight:normal;">Think_pad_T480x</div>
<div class="t " style="left:580.3px;top:361.00px;font-size:10.3px;line-height:12.88px;color:#222;font-weight:normal;">Think_pad_T480 - Lenovo Thinkpad T480 I…</div>
<div class="t " style="left:991px;width:300px;text-align:center;top:361.00px;font-size:10.3px;line-height:12.88px;color:#222;font-weight:normal;">38 000,00</div>
<div class="t " style="left:1098.5px;width:300px;text-align:center;top:361.00px;font-size:10.3px;line-height:12.88px;color:#222;font-weight:normal;">1</div>
<div class="t " style="left:1222.5px;width:300px;text-align:center;top:361.00px;font-size:10.3px;line-height:12.88px;color:#222;font-weight:normal;">38 000,00</div>
<div class="t " style="left:1345.5px;width:300px;text-align:center;top:361.00px;font-size:10.3px;line-height:12.88px;color:#222;font-weight:normal;">0</div>
<div class="t " style="left:1469px;width:300px;text-align:center;top:361.00px;font-size:10.3px;line-height:12.88px;color:#222;font-weight:normal;">0,00</div>
<div class="t " style="left:1585px;width:300px;text-align:center;top:361.00px;font-size:10.3px;line-height:12.88px;color:#222;font-weight:normal;">1</div>
<div class="t " style="left:1690px;width:300px;text-align:center;top:361.00px;font-size:10.3px;line-height:12.88px;color:#222;font-weight:normal;">38 000,00</div>
<div class="r" style="left:168px;top:384px;width:1726px;height:32px;background:#f8f8f8;"></div>
<div class="r" style="left:168px;top:416px;width:1726px;height:1px;background:#e0e0e0;"></div>
<svg style="left:214.7px;top:390.8px" width="18.5" height="18.5" viewBox="0 0 20 20"><path d="M10.2 1.3A8.5 8.5 0 1 1 5.6 17.1L0.8 19L2.5 14.3A8.5 8.5 0 0 1 10.2 1.3Z" fill="none" stroke="#0b7f0b" stroke-width="1.35" stroke-linejoin="round"/><path d="M5.9 5.2C5.2 6 4.9 6.9 5.3 8.3C6.1 11.1 8.7 13.7 11.7 14.6C13.1 15 14.1 14.6 14.8 13.8L14.6 12.6L12.4 11.5L11.3 12.4C9.9 11.8 8.6 10.5 7.9 9.1L8.7 8L7.7 5.5C7 4.8 6.4 4.8 5.9 5.2Z" fill="#0b7f0b"/></svg>
<svg style="left:239.8px;top:393.3px" width="11" height="11" viewBox="0 0 11 11"><path d="M5.5 0.2L10.9 2.5V8.5L5.5 10.8L0.1 8.5V2.5Z" fill="#ab9845"/><path d="M5.5 1.3L9.5 2.9L5.5 4.5L1.5 2.9Z" fill="#fbfaf4"/><path d="M6.5 5.5L9.8 4.0V7.8L6.5 9.3Z" fill="#fbfaf4"/></svg>
<div class="t " style="left:253.3px;top:394.00px;font-size:10.3px;line-height:12.88px;color:#1a1a6e;font-weight:normal;">Think_pad_T480</div>
<div class="t " style="left:580.3px;top:394.00px;font-size:10.3px;line-height:12.88px;color:#222;font-weight:normal;">Lenovo Thinkpad T480 I5 6eme 16 GB ram…</div>
<div class="t " style="left:991px;width:300px;text-align:center;top:394.00px;font-size:10.3px;line-height:12.88px;color:#222;font-weight:normal;">40 000,00</div>
<div class="t " style="left:1098.5px;width:300px;text-align:center;top:394.00px;font-size:10.3px;line-height:12.88px;color:#222;font-weight:normal;">1</div>
<div class="t " style="left:1222.5px;width:300px;text-align:center;top:394.00px;font-size:10.3px;line-height:12.88px;color:#222;font-weight:normal;">40 000,00</div>
<div class="t " style="left:1345.5px;width:300px;text-align:center;top:394.00px;font-size:10.3px;line-height:12.88px;color:#222;font-weight:normal;">0</div>
<div class="t " style="left:1469px;width:300px;text-align:center;top:394.00px;font-size:10.3px;line-height:12.88px;color:#222;font-weight:normal;">0,00</div>
<div class="t " style="left:1585px;width:300px;text-align:center;top:394.00px;font-size:10.3px;line-height:12.88px;color:#222;font-weight:normal;">1</div>
<div class="t " style="left:1690px;width:300px;text-align:center;top:394.00px;font-size:10.3px;line-height:12.88px;color:#222;font-weight:normal;">40 000,00</div>
<div class="r" style="left:168px;top:417px;width:1726px;height:32px;background:#ffffff;"></div>
<div class="r" style="left:168px;top:449px;width:1726px;height:1px;background:#e0e0e0;"></div>
<svg style="left:214.7px;top:423.8px" width="18.5" height="18.5" viewBox="0 0 20 20"><path d="M10.2 1.3A8.5 8.5 0 1 1 5.6 17.1L0.8 19L2.5 14.3A8.5 8.5 0 0 1 10.2 1.3Z" fill="none" stroke="#0b7f0b" stroke-width="1.35" stroke-linejoin="round"/><path d="M5.9 5.2C5.2 6 4.9 6.9 5.3 8.3C6.1 11.1 8.7 13.7 11.7 14.6C13.1 15 14.1 14.6 14.8 13.8L14.6 12.6L12.4 11.5L11.3 12.4C9.9 11.8 8.6 10.5 7.9 9.1L8.7 8L7.7 5.5C7 4.8 6.4 4.8 5.9 5.2Z" fill="#0b7f0b"/></svg>
<svg style="left:239.8px;top:426.3px" width="11" height="11" viewBox="0 0 11 11"><path d="M5.5 0.2L10.9 2.5V8.5L5.5 10.8L0.1 8.5V2.5Z" fill="#ab9845"/><path d="M5.5 1.3L9.5 2.9L5.5 4.5L1.5 2.9Z" fill="#fbfaf4"/><path d="M6.5 5.5L9.8 4.0V7.8L6.5 9.3Z" fill="#fbfaf4"/></svg>
<div class="t " style="left:253.3px;top:427.00px;font-size:10.3px;line-height:12.88px;color:#1a1a6e;font-weight:normal;">HP6580-001</div>
<div class="t " style="left:580.3px;top:427.00px;font-size:10.3px;line-height:12.88px;color:#222;font-weight:normal;">HP Elite book 6583 G5 I5 7éme 8GO de ra…</div>
<div class="t " style="left:796px;top:427.00px;font-size:10.3px;line-height:12.88px;color:#222;font-weight:normal;">Produit manufacturé</div>
<div class="t " style="left:991px;width:300px;text-align:center;top:427.00px;font-size:10.3px;line-height:12.88px;color:#222;font-weight:normal;">46 000,00</div>
<div class="t " style="left:1098.5px;width:300px;text-align:center;top:427.00px;font-size:10.3px;line-height:12.88px;color:#222;font-weight:normal;">1</div>
<div class="t " style="left:1222.5px;width:300px;text-align:center;top:427.00px;font-size:10.3px;line-height:12.88px;color:#222;font-weight:normal;">46 000,00</div>
<div class="t " style="left:1345.5px;width:300px;text-align:center;top:427.00px;font-size:10.3px;line-height:12.88px;color:#222;font-weight:normal;">0</div>
<div class="t " style="left:1469px;width:300px;text-align:center;top:427.00px;font-size:10.3px;line-height:12.88px;color:#222;font-weight:normal;">0,00</div>
<div class="t " style="left:1585px;width:300px;text-align:center;top:427.00px;font-size:10.3px;line-height:12.88px;color:#222;font-weight:normal;">1</div>
<div class="t " style="left:1690px;width:300px;text-align:center;top:427.00px;font-size:10.3px;line-height:12.88px;color:#222;font-weight:normal;">46 000,00</div>
<div class="r" style="left:168px;top:450px;width:1726px;height:32px;background:#f8f8f8;"></div>
<div class="r" style="left:168px;top:482px;width:1726px;height:1px;background:#e0e0e0;"></div>
<svg style="left:214.7px;top:456.8px" width="18.5" height="18.5" viewBox="0 0 20 20"><path d="M10.2 1.3A8.5 8.5 0 1 1 5.6 17.1L0.8 19L2.5 14.3A8.5 8.5 0 0 1 10.2 1.3Z" fill="none" stroke="#0b7f0b" stroke-width="1.35" stroke-linejoin="round"/><path d="M5.9 5.2C5.2 6 4.9 6.9 5.3 8.3C6.1 11.1 8.7 13.7 11.7 14.6C13.1 15 14.1 14.6 14.8 13.8L14.6 12.6L12.4 11.5L11.3 12.4C9.9 11.8 8.6 10.5 7.9 9.1L8.7 8L7.7 5.5C7 4.8 6.4 4.8 5.9 5.2Z" fill="#0b7f0b"/></svg>
<svg style="left:239.8px;top:459.3px" width="11" height="11" viewBox="0 0 11 11"><path d="M5.5 0.2L10.9 2.5V8.5L5.5 10.8L0.1 8.5V2.5Z" fill="#ab9845"/><path d="M5.5 1.3L9.5 2.9L5.5 4.5L1.5 2.9Z" fill="#fbfaf4"/><path d="M6.5 5.5L9.8 4.0V7.8L6.5 9.3Z" fill="#fbfaf4"/></svg>
<div class="t " style="left:253.3px;top:460.00px;font-size:10.3px;line-height:12.88px;color:#1a1a6e;font-weight:normal;">Disquedur_SATA0001</div>
<div class="t " style="left:580.3px;top:460.00px;font-size:10.3px;line-height:12.88px;color:#222;font-weight:normal;">Rack pour disque dur 2.5 SATA, USB 3.0 /1T</div>
<div class="t " style="left:991px;width:300px;text-align:center;top:460.00px;font-size:10.3px;line-height:12.88px;color:#222;font-weight:normal;">75 000,00</div>
<div class="t " style="left:1098.5px;width:300px;text-align:center;top:460.00px;font-size:10.3px;line-height:12.88px;color:#222;font-weight:normal;">1</div>
<div class="t " style="left:1222.5px;width:300px;text-align:center;top:460.00px;font-size:10.3px;line-height:12.88px;color:#222;font-weight:normal;">75 000,00</div>
<div class="t " style="left:1345.5px;width:300px;text-align:center;top:460.00px;font-size:10.3px;line-height:12.88px;color:#222;font-weight:normal;">0</div>
<div class="t " style="left:1469px;width:300px;text-align:center;top:460.00px;font-size:10.3px;line-height:12.88px;color:#222;font-weight:normal;">0,00</div>
<div class="t " style="left:1585px;width:300px;text-align:center;top:460.00px;font-size:10.3px;line-height:12.88px;color:#222;font-weight:normal;">1</div>
<div class="t " style="left:1690px;width:300px;text-align:center;top:460.00px;font-size:10.3px;line-height:12.88px;color:#222;font-weight:normal;">75 000,00</div>
<div class="r" style="left:168px;top:483px;width:1726px;height:32px;background:#ffffff;"></div>
<div class="r" style="left:168px;top:515px;width:1726px;height:1px;background:#e0e0e0;"></div>
<svg style="left:214.7px;top:489.8px" width="18.5" height="18.5" viewBox="0 0 20 20"><path d="M10.2 1.3A8.5 8.5 0 1 1 5.6 17.1L0.8 19L2.5 14.3A8.5 8.5 0 0 1 10.2 1.3Z" fill="none" stroke="#0b7f0b" stroke-width="1.35" stroke-linejoin="round"/><path d="M5.9 5.2C5.2 6 4.9 6.9 5.3 8.3C6.1 11.1 8.7 13.7 11.7 14.6C13.1 15 14.1 14.6 14.8 13.8L14.6 12.6L12.4 11.5L11.3 12.4C9.9 11.8 8.6 10.5 7.9 9.1L8.7 8L7.7 5.5C7 4.8 6.4 4.8 5.9 5.2Z" fill="#0b7f0b"/></svg>
<svg style="left:239.8px;top:492.3px" width="11" height="11" viewBox="0 0 11 11"><path d="M5.5 0.2L10.9 2.5V8.5L5.5 10.8L0.1 8.5V2.5Z" fill="#ab9845"/><path d="M5.5 1.3L9.5 2.9L5.5 4.5L1.5 2.9Z" fill="#fbfaf4"/><path d="M6.5 5.5L9.8 4.0V7.8L6.5 9.3Z" fill="#fbfaf4"/></svg>
<div class="t " style="left:253.3px;top:493.00px;font-size:10.3px;line-height:12.88px;color:#1a1a6e;font-weight:normal;">Print-0004</div>
<div class="t " style="left:580.3px;top:493.00px;font-size:10.3px;line-height:12.88px;color:#222;font-weight:normal;">Imprimante code à barre XPrinter xp-TT42…</div>
<div class="t " style="left:991px;width:300px;text-align:center;top:493.00px;font-size:10.3px;line-height:12.88px;color:#222;font-weight:normal;">16 000,00</div>
<div class="t " style="left:1098.5px;width:300px;text-align:center;top:493.00px;font-size:10.3px;line-height:12.88px;color:#222;font-weight:normal;">1</div>
<div class="t " style="left:1222.5px;width:300px;text-align:center;top:493.00px;font-size:10.3px;line-height:12.88px;color:#222;font-weight:normal;">16 000,00</div>
<div class="t " style="left:1345.5px;width:300px;text-align:center;top:493.00px;font-size:10.3px;line-height:12.88px;color:#222;font-weight:normal;">0</div>
<div class="t " style="left:1469px;width:300px;text-align:center;top:493.00px;font-size:10.3px;line-height:12.88px;color:#222;font-weight:normal;">0,00</div>
<div class="t " style="left:1585px;width:300px;text-align:center;top:493.00px;font-size:10.3px;line-height:12.88px;color:#222;font-weight:normal;">1</div>
<div class="t " style="left:1690px;width:300px;text-align:center;top:493.00px;font-size:10.3px;line-height:12.88px;color:#222;font-weight:normal;">16 000,00</div>
<div class="r" style="left:168px;top:516px;width:1726px;height:32px;background:#f8f8f8;"></div>
<div class="r" style="left:168px;top:548px;width:1726px;height:1px;background:#e0e0e0;"></div>
<svg style="left:214.7px;top:522.8px" width="18.5" height="18.5" viewBox="0 0 20 20"><path d="M10.2 1.3A8.5 8.5 0 1 1 5.6 17.1L0.8 19L2.5 14.3A8.5 8.5 0 0 1 10.2 1.3Z" fill="none" stroke="#0b7f0b" stroke-width="1.35" stroke-linejoin="round"/><path d="M5.9 5.2C5.2 6 4.9 6.9 5.3 8.3C6.1 11.1 8.7 13.7 11.7 14.6C13.1 15 14.1 14.6 14.8 13.8L14.6 12.6L12.4 11.5L11.3 12.4C9.9 11.8 8.6 10.5 7.9 9.1L8.7 8L7.7 5.5C7 4.8 6.4 4.8 5.9 5.2Z" fill="#0b7f0b"/></svg>
<svg style="left:239.8px;top:525.3px" width="11" height="11" viewBox="0 0 11 11"><path d="M5.5 0.2L10.9 2.5V8.5L5.5 10.8L0.1 8.5V2.5Z" fill="#ab9845"/><path d="M5.5 1.3L9.5 2.9L5.5 4.5L1.5 2.9Z" fill="#fbfaf4"/><path d="M6.5 5.5L9.8 4.0V7.8L6.5 9.3Z" fill="#fbfaf4"/></svg>
<div class="t " style="left:253.3px;top:526.00px;font-size:10.3px;line-height:12.88px;color:#1a1a6e;font-weight:normal;">Print_0003</div>
<div class="t " style="left:580.3px;top:526.00px;font-size:10.3px;line-height:12.88px;color:#222;font-weight:normal;">Imprimante ticket thermique TP-80A USB</div>
<div class="t " style="left:991px;width:300px;text-align:center;top:526.00px;font-size:10.3px;line-height:12.88px;color:#222;font-weight:normal;">14 500,00</div>
<div class="t " style="left:1098.5px;width:300px;text-align:center;top:526.00px;font-size:10.3px;line-height:12.88px;color:#222;font-weight:normal;">1</div>
<div class="t " style="left:1222.5px;width:300px;text-align:center;top:526.00px;font-size:10.3px;line-height:12.88px;color:#222;font-weight:normal;">14 500,00</div>
<div class="t " style="left:1345.5px;width:300px;text-align:center;top:526.00px;font-size:10.3px;line-height:12.88px;color:#222;font-weight:normal;">0</div>
<div class="t " style="left:1469px;width:300px;text-align:center;top:526.00px;font-size:10.3px;line-height:12.88px;color:#222;font-weight:normal;">0,00</div>
<div class="t " style="left:1585px;width:300px;text-align:center;top:526.00px;font-size:10.3px;line-height:12.88px;color:#222;font-weight:normal;">1</div>
<div class="t " style="left:1690px;width:300px;text-align:center;top:526.00px;font-size:10.3px;line-height:12.88px;color:#222;font-weight:normal;">14 500,00</div>
<div class="r" style="left:168px;top:549px;width:1726px;height:32px;background:#ffffff;"></div>
<div class="r" style="left:168px;top:581px;width:1726px;height:1px;background:#e0e0e0;"></div>
<svg style="left:214.7px;top:555.8px" width="18.5" height="18.5" viewBox="0 0 20 20"><path d="M10.2 1.3A8.5 8.5 0 1 1 5.6 17.1L0.8 19L2.5 14.3A8.5 8.5 0 0 1 10.2 1.3Z" fill="none" stroke="#0b7f0b" stroke-width="1.35" stroke-linejoin="round"/><path d="M5.9 5.2C5.2 6 4.9 6.9 5.3 8.3C6.1 11.1 8.7 13.7 11.7 14.6C13.1 15 14.1 14.6 14.8 13.8L14.6 12.6L12.4 11.5L11.3 12.4C9.9 11.8 8.6 10.5 7.9 9.1L8.7 8L7.7 5.5C7 4.8 6.4 4.8 5.9 5.2Z" fill="#0b7f0b"/></svg>
<svg style="left:239.8px;top:558.3px" width="11" height="11" viewBox="0 0 11 11"><path d="M5.5 0.2L10.9 2.5V8.5L5.5 10.8L0.1 8.5V2.5Z" fill="#ab9845"/><path d="M5.5 1.3L9.5 2.9L5.5 4.5L1.5 2.9Z" fill="#fbfaf4"/><path d="M6.5 5.5L9.8 4.0V7.8L6.5 9.3Z" fill="#fbfaf4"/></svg>
<div class="t " style="left:253.3px;top:559.00px;font-size:10.3px;line-height:12.88px;color:#1a1a6e;font-weight:normal;">Douch_0001</div>
<div class="t " style="left:580.3px;top:559.00px;font-size:10.3px;line-height:12.88px;color:#222;font-weight:normal;">Douchette code à barre sans fil</div>
<div class="t " style="left:991px;width:300px;text-align:center;top:559.00px;font-size:10.3px;line-height:12.88px;color:#222;font-weight:normal;">8 500,00</div>
<div class="t " style="left:1098.5px;width:300px;text-align:center;top:559.00px;font-size:10.3px;line-height:12.88px;color:#222;font-weight:normal;">1</div>
<div class="t " style="left:1222.5px;width:300px;text-align:center;top:559.00px;font-size:10.3px;line-height:12.88px;color:#222;font-weight:normal;">8 500,00</div>
<div class="t " style="left:1345.5px;width:300px;text-align:center;top:559.00px;font-size:10.3px;line-height:12.88px;color:#222;font-weight:normal;">0</div>
<div class="t " style="left:1469px;width:300px;text-align:center;top:559.00px;font-size:10.3px;line-height:12.88px;color:#222;font-weight:normal;">0,00</div>
<div class="t " style="left:1585px;width:300px;text-align:center;top:559.00px;font-size:10.3px;line-height:12.88px;color:#222;font-weight:normal;">1</div>
<div class="t " style="left:1690px;width:300px;text-align:center;top:559.00px;font-size:10.3px;line-height:12.88px;color:#222;font-weight:normal;">8 500,00</div>
<div class="r" style="left:168px;top:582px;width:1726px;height:32px;background:#f8f8f8;"></div>
<div class="r" style="left:168px;top:614px;width:1726px;height:1px;background:#e0e0e0;"></div>
<svg style="left:214.7px;top:588.8px" width="18.5" height="18.5" viewBox="0 0 20 20"><path d="M10.2 1.3A8.5 8.5 0 1 1 5.6 17.1L0.8 19L2.5 14.3A8.5 8.5 0 0 1 10.2 1.3Z" fill="none" stroke="#0b7f0b" stroke-width="1.35" stroke-linejoin="round"/><path d="M5.9 5.2C5.2 6 4.9 6.9 5.3 8.3C6.1 11.1 8.7 13.7 11.7 14.6C13.1 15 14.1 14.6 14.8 13.8L14.6 12.6L12.4 11.5L11.3 12.4C9.9 11.8 8.6 10.5 7.9 9.1L8.7 8L7.7 5.5C7 4.8 6.4 4.8 5.9 5.2Z" fill="#0b7f0b"/></svg>
<svg style="left:239.8px;top:591.3px" width="11" height="11" viewBox="0 0 11 11"><path d="M5.5 0.2L10.9 2.5V8.5L5.5 10.8L0.1 8.5V2.5Z" fill="#ab9845"/><path d="M5.5 1.3L9.5 2.9L5.5 4.5L1.5 2.9Z" fill="#fbfaf4"/><path d="M6.5 5.5L9.8 4.0V7.8L6.5 9.3Z" fill="#fbfaf4"/></svg>
<div class="t " style="left:253.3px;top:592.00px;font-size:10.3px;line-height:12.88px;color:#1a1a6e;font-weight:normal;">HP_00012</div>
<div class="t " style="left:580.3px;top:592.00px;font-size:10.3px;line-height:12.88px;color:#222;font-weight:normal;">HP Elite book 840 G3 I5 6éme 8GO de ram…</div>
<div class="t " style="left:991px;width:300px;text-align:center;top:592.00px;font-size:10.3px;line-height:12.88px;color:#222;font-weight:normal;">39 000,00</div>
<div class="t " style="left:1098.5px;width:300px;text-align:center;top:592.00px;font-size:10.3px;line-height:12.88px;color:#222;font-weight:normal;">3</div>
<div class="t " style="left:1222.5px;width:300px;text-align:center;top:592.00px;font-size:10.3px;line-height:12.88px;color:#222;font-weight:normal;">117 000,00</div>
<div class="t " style="left:1345.5px;width:300px;text-align:center;top:592.00px;font-size:10.3px;line-height:12.88px;color:#222;font-weight:normal;">0</div>
<div class="t " style="left:1469px;width:300px;text-align:center;top:592.00px;font-size:10.3px;line-height:12.88px;color:#222;font-weight:normal;">0,00</div>
<div class="t " style="left:1585px;width:300px;text-align:center;top:592.00px;font-size:10.3px;line-height:12.88px;color:#222;font-weight:normal;">3</div>
<div class="t " style="left:1690px;width:300px;text-align:center;top:592.00px;font-size:10.3px;line-height:12.88px;color:#222;font-weight:normal;">117 000,00</div>
<div class="r" style="left:168px;top:615px;width:1726px;height:32px;background:#ffffff;"></div>
<div class="r" style="left:168px;top:647px;width:1726px;height:1px;background:#e0e0e0;"></div>
<svg style="left:214.7px;top:621.8px" width="18.5" height="18.5" viewBox="0 0 20 20"><path d="M10.2 1.3A8.5 8.5 0 1 1 5.6 17.1L0.8 19L2.5 14.3A8.5 8.5 0 0 1 10.2 1.3Z" fill="none" stroke="#0b7f0b" stroke-width="1.35" stroke-linejoin="round"/><path d="M5.9 5.2C5.2 6 4.9 6.9 5.3 8.3C6.1 11.1 8.7 13.7 11.7 14.6C13.1 15 14.1 14.6 14.8 13.8L14.6 12.6L12.4 11.5L11.3 12.4C9.9 11.8 8.6 10.5 7.9 9.1L8.7 8L7.7 5.5C7 4.8 6.4 4.8 5.9 5.2Z" fill="#0b7f0b"/></svg>
<svg style="left:239.8px;top:624.3px" width="11" height="11" viewBox="0 0 11 11"><path d="M5.5 0.2L10.9 2.5V8.5L5.5 10.8L0.1 8.5V2.5Z" fill="#ab9845"/><path d="M5.5 1.3L9.5 2.9L5.5 4.5L1.5 2.9Z" fill="#fbfaf4"/><path d="M6.5 5.5L9.8 4.0V7.8L6.5 9.3Z" fill="#fbfaf4"/></svg>
<div class="t " style="left:253.3px;top:625.00px;font-size:10.3px;line-height:12.88px;color:#1a1a6e;font-weight:normal;">UNITE_0001</div>
<div class="t " style="left:580.3px;top:625.00px;font-size:10.3px;line-height:12.88px;color:#222;font-weight:normal;">Unité Dell Optiplex 3020 I5-4570 DDR3 4G …</div>
<div class="t " style="left:991px;width:300px;text-align:center;top:625.00px;font-size:10.3px;line-height:12.88px;color:#222;font-weight:normal;">47 500,00</div>
<div class="t " style="left:1098.5px;width:300px;text-align:center;top:625.00px;font-size:10.3px;line-height:12.88px;color:#222;font-weight:normal;">2</div>
<div class="t " style="left:1222.5px;width:300px;text-align:center;top:625.00px;font-size:10.3px;line-height:12.88px;color:#222;font-weight:normal;">95 000,00</div>
<div class="t " style="left:1345.5px;width:300px;text-align:center;top:625.00px;font-size:10.3px;line-height:12.88px;color:#222;font-weight:normal;">0</div>
<div class="t " style="left:1469px;width:300px;text-align:center;top:625.00px;font-size:10.3px;line-height:12.88px;color:#222;font-weight:normal;">0,00</div>
<div class="t " style="left:1585px;width:300px;text-align:center;top:625.00px;font-size:10.3px;line-height:12.88px;color:#222;font-weight:normal;">2</div>
<div class="t " style="left:1690px;width:300px;text-align:center;top:625.00px;font-size:10.3px;line-height:12.88px;color:#222;font-weight:normal;">95 000,00</div>
<div class="r" style="left:168px;top:648px;width:1726px;height:32px;background:#f8f8f8;"></div>
<div class="r" style="left:168px;top:680px;width:1726px;height:1px;background:#e0e0e0;"></div>
<svg style="left:214.7px;top:654.8px" width="18.5" height="18.5" viewBox="0 0 20 20"><path d="M10.2 1.3A8.5 8.5 0 1 1 5.6 17.1L0.8 19L2.5 14.3A8.5 8.5 0 0 1 10.2 1.3Z" fill="none" stroke="#0b7f0b" stroke-width="1.35" stroke-linejoin="round"/><path d="M5.9 5.2C5.2 6 4.9 6.9 5.3 8.3C6.1 11.1 8.7 13.7 11.7 14.6C13.1 15 14.1 14.6 14.8 13.8L14.6 12.6L12.4 11.5L11.3 12.4C9.9 11.8 8.6 10.5 7.9 9.1L8.7 8L7.7 5.5C7 4.8 6.4 4.8 5.9 5.2Z" fill="#0b7f0b"/></svg>
<svg style="left:239.8px;top:657.3px" width="11" height="11" viewBox="0 0 11 11"><path d="M5.5 0.2L10.9 2.5V8.5L5.5 10.8L0.1 8.5V2.5Z" fill="#ab9845"/><path d="M5.5 1.3L9.5 2.9L5.5 4.5L1.5 2.9Z" fill="#fbfaf4"/><path d="M6.5 5.5L9.8 4.0V7.8L6.5 9.3Z" fill="#fbfaf4"/></svg>
<div class="t " style="left:253.3px;top:658.00px;font-size:10.3px;line-height:12.88px;color:#1a1a6e;font-weight:normal;">IMP_FS-1025_MFP</div>
<div class="t " style="left:580.3px;top:658.00px;font-size:10.3px;line-height:12.88px;color:#222;font-weight:normal;">Imprimante Kyocera FS-1025 MFP</div>
<div class="t " style="left:991px;width:300px;text-align:center;top:658.00px;font-size:10.3px;line-height:12.88px;color:#222;font-weight:normal;">50 000,00</div>
<div class="t " style="left:1098.5px;width:300px;text-align:center;top:658.00px;font-size:10.3px;line-height:12.88px;color:#222;font-weight:normal;">1</div>
<div class="t " style="left:1222.5px;width:300px;text-align:center;top:658.00px;font-size:10.3px;line-height:12.88px;color:#222;font-weight:normal;">50 000,00</div>
<div class="t " style="left:1345.5px;width:300px;text-align:center;top:658.00px;font-size:10.3px;line-height:12.88px;color:#222;font-weight:normal;">0</div>
<div class="t " style="left:1469px;width:300px;text-align:center;top:658.00px;font-size:10.3px;line-height:12.88px;color:#222;font-weight:normal;">0,00</div>
<div class="t " style="left:1585px;width:300px;text-align:center;top:658.00px;font-size:10.3px;line-height:12.88px;color:#222;font-weight:normal;">1</div>
<div class="t " style="left:1690px;width:300px;text-align:center;top:658.00px;font-size:10.3px;line-height:12.88px;color:#222;font-weight:normal;">50 000,00</div>
<div class="r" style="left:168px;top:681px;width:1726px;height:27px;background:#fde502;"></div>
<div class="r" style="left:168px;top:708px;width:1726px;height:1px;background:#c8c8c8;"></div>
<div class="t " style="left:173.2px;top:689.00px;font-size:10.3px;line-height:12.88px;color:#1b1b3a;font-weight:bold;">Total</div>
<div class="t " style="left:792px;width:300px;text-align:center;top:688.00px;font-size:11px;line-height:13.75px;color:#1b1b2e;font-weight:bold;">553 600,00</div>
<div class="t " style="left:991px;width:300px;text-align:center;top:688.00px;font-size:11px;line-height:13.75px;color:#1b1b2e;font-weight:bold;">19,00</div>
<div class="t " style="left:1099px;width:300px;text-align:center;top:688.00px;font-size:11px;line-height:13.75px;color:#1b1b2e;font-weight:bold;">731 600,00</div>
<div class="t " style="left:1222.5px;width:300px;text-align:center;top:688.00px;font-size:11px;line-height:13.75px;color:#1b1b2e;font-weight:bold;">0,00</div>
<div class="t " style="left:1346px;width:300px;text-align:center;top:688.00px;font-size:11px;line-height:13.75px;color:#1b1b2e;font-weight:bold;">0,00</div>
<div class="t " style="left:1470px;width:300px;text-align:center;top:688.00px;font-size:11px;line-height:13.75px;color:#1b1b2e;font-weight:bold;">19,00</div>
<div class="t " style="left:1585.5px;width:300px;text-align:center;top:688.00px;font-size:11px;line-height:13.75px;color:#1b1b2e;font-weight:bold;">731 600,00</div>
<div class="r" style="left:63px;top:382px;width:129px;height:23px;background:#fff;border:1px solid #4a4a4a;"></div>
<div class="t " style="left:71.4px;top:388.00px;font-size:11.6px;line-height:14.5px;color:#3b3b3b;font-weight:normal;">Valeur stock expédiée</div>
<svg style="left:0;top:300px" width="200" height="100" shape-rendering="crispEdges"><rect x="2.5" y="63.5" width="117.8" height="21.8" rx="13" ry="5.5" fill="none" stroke="#ec1c24" stroke-width="5"/></svg>
</body></html>
